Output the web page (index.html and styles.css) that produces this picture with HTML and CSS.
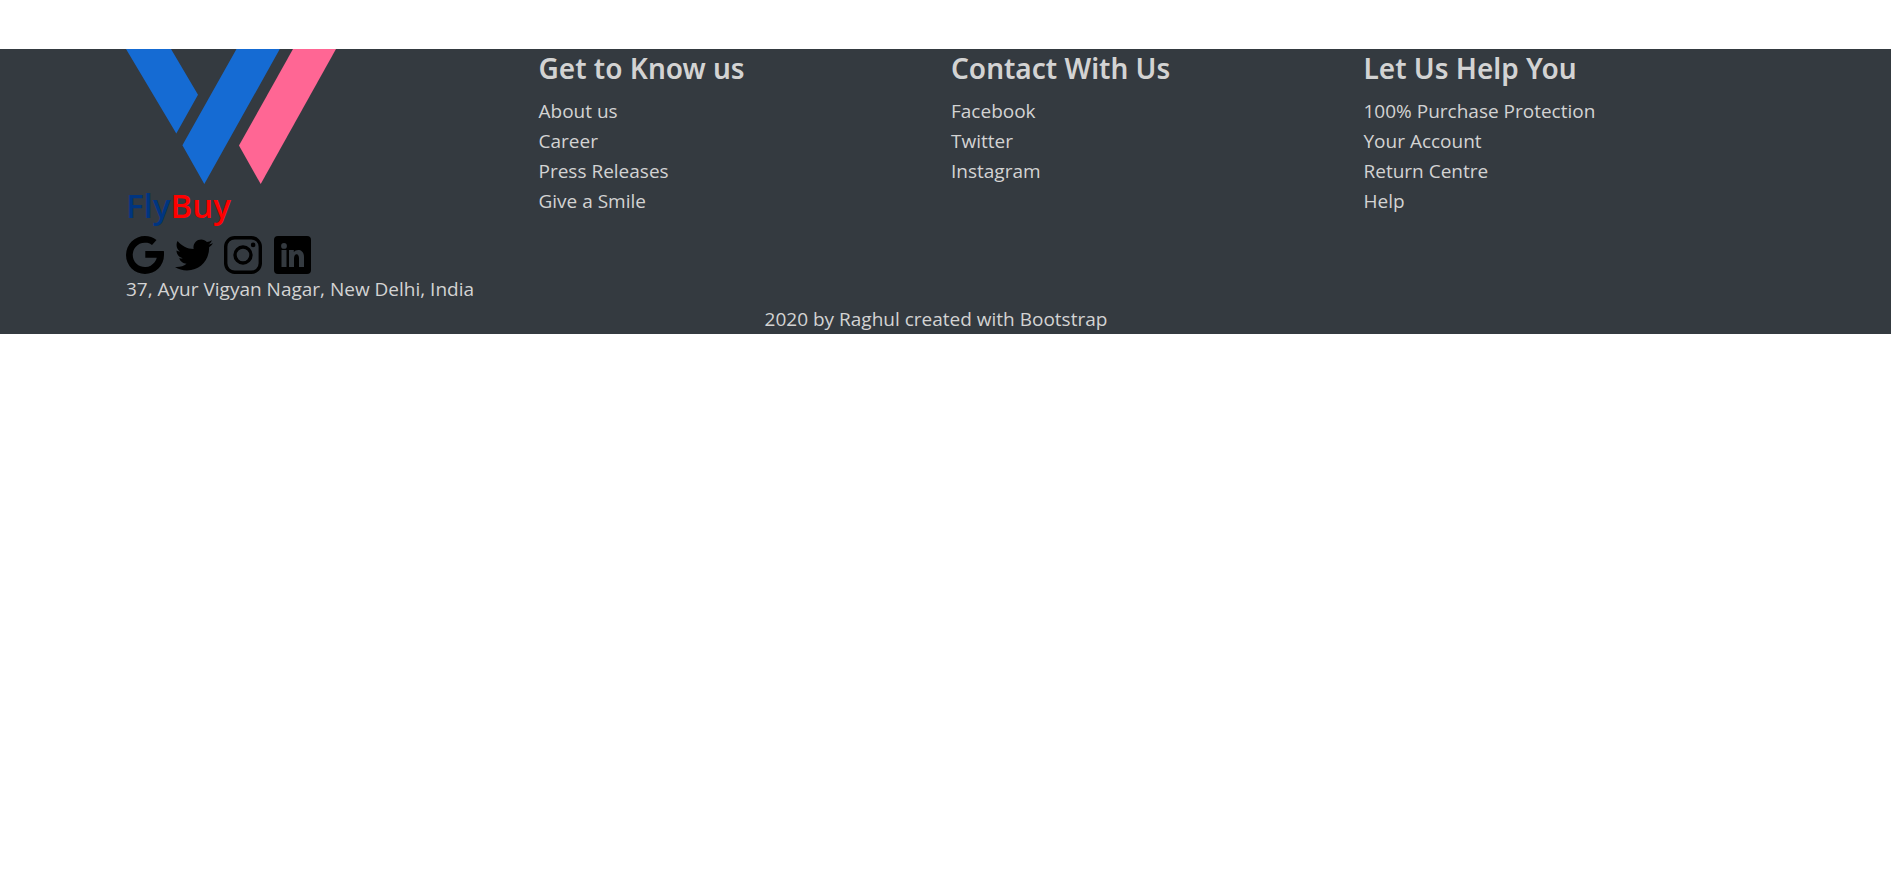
FILE: index.html
```html
<!DOCTYPE html>
<html lang="en">
<head>
<meta charset="utf-8">
<meta name="viewport" content="width=device-width, initial-scale=1">
<title>FlyBuy</title>
<link rel="stylesheet" href="styles.css">
</head>
<body>
<footer class="footer">
  <div class="container">
    <div class="columns">
      <section class="column">
        <svg class="logo" viewBox="0 0 210 135" role="img" aria-label="FlyBuy logo">
          <path fill="#156bd3" d="M0 0H45L72 45.7 50.3 84.5ZM110.5 0H153.8L78.3 135 56.4 96.3Z"/>
          <path fill="#ff6694" d="M167 0H210L134.7 135 113 96.6Z"/>
        </svg>
        <h1 class="brand"><span class="brand-fly">Fly</span><span class="brand-buy">Buy</span></h1>
        <div class="social">
          <a href="#" aria-label="Google"><svg viewBox="0 0 38 38"><path d="M19 0a19 19 0 1 0 19 19v-2.500q0-1-.2-1.500H19.300v6.700H30.800A12.200 12.200 0 1 1 26 8.900L30.500 3.900A19 19 0 0 0 19 0z"/></svg></a>
          <a href="#" aria-label="Twitter"><svg viewBox="0 0 24 24"><path d="M23.954 4.569c-.885.389-1.83.654-2.825.775 1.014-.611 1.794-1.574 2.163-2.723-.951.555-2.005.959-3.127 1.184-.896-.959-2.173-1.559-3.591-1.559-2.717 0-4.92 2.203-4.92 4.917 0 .39.045.765.127 1.124C7.691 8.094 4.066 6.13 1.64 3.161c-.427.722-.666 1.561-.666 2.475 0 1.71.87 3.213 2.188 4.096-.807-.026-1.566-.248-2.228-.616v.061c0 2.385 1.693 4.374 3.946 4.827-.413.111-.849.171-1.296.171-.314 0-.615-.03-.916-.086.631 1.953 2.445 3.377 4.604 3.417-1.68 1.319-3.809 2.105-6.102 2.105-.39 0-.779-.023-1.17-.067 2.189 1.394 4.768 2.209 7.557 2.209 9.054 0 13.999-7.496 13.999-13.986 0-.209 0-.42-.015-.63.961-.689 1.8-1.56 2.46-2.548l-.047-.02z"/></svg></a>
          <a href="#" aria-label="Instagram"><svg viewBox="0 0 38 38"><rect x="1.700" y="1.700" width="34.600" height="34.600" rx="9" fill="none" stroke="#000" stroke-width="3.400"/><circle cx="19" cy="19" r="8" fill="none" stroke="#000" stroke-width="3.400"/><circle cx="29.100" cy="8.900" r="2.300"/></svg></a>
          <a href="#" aria-label="LinkedIn"><svg viewBox="0 0 38 38"><path fill-rule="evenodd" d="M5 0H34Q38 0 38 4V34Q38 38 34 38H5Q1 38 1 34V4Q1 0 5 0ZM8.500 14V31H13.500V14ZM11 7A2.900 2.900 0 1 0 11 12.800 2.900 2.900 0 1 0 11 7ZM16 14V31H21V22.500C21 16.800 26 17 26 22V31H31V21C31 12.800 23.200 12.500 20.800 16.300V14Z"/></svg></a>
        </div>
        <p>37, Ayur Vigyan Nagar, New Delhi, India</p>
      </section>
      <section class="column">
        <h2 class="title">Get to Know us</h2>
        <ul class="links">
          <li><a href="#">About us</a></li>
          <li><a href="#">Career</a></li>
          <li><a href="#">Press Releases</a></li>
          <li><a href="#">Give a Smile</a></li>
        </ul>
      </section>
      <section class="column">
        <h2 class="title">Contact With Us</h2>
        <ul class="links">
          <li><a href="#">Facebook</a></li>
          <li><a href="#">Twitter</a></li>
          <li><a href="#">Instagram</a></li>
        </ul>
      </section>
      <section class="column">
        <h2 class="title">Let Us Help You</h2>
        <ul class="links">
          <li><a href="#">100% Purchase Protection</a></li>
          <li><a href="#">Your Account</a></li>
          <li><a href="#">Return Centre</a></li>
          <li><a href="#">Help</a></li>
        </ul>
      </section>
    </div>
    <p class="copyright">2020 by Raghul created with Bootstrap</p>
  </div>
</footer>
</body>
</html>
```
FILE: styles.css
```css
* {
  box-sizing: border-box;
  margin: 0;
  padding: 0;
}

body {
  padding-top: 49px;
  background: #fff;
  color: #d3d3d3;
  font-family: "Segoe UI", "Open Sans", "Noto Sans", sans-serif;
  font-size: 19px;
  line-height: 30px;
}

.footer {
  padding-right: 19px;
  background: #343a40;
}

.container {
  max-width: 1650px;
  margin: 0 auto;
}

.columns {
  display: grid;
  grid-template-columns: repeat(auto-fit, minmax(380px, 1fr));
}

.column {
  padding: 0 15px;
}

.logo {
  display: block;
  width: 210px;
}

.brand {
  margin-bottom: 8px;
  font-size: 33px;
  font-weight: 600;
  line-height: 44px;
}

.brand-fly {
  color: #003580;
}

.brand-buy {
  color: #f00;
}

.social {
  display: flex;
  gap: 11px;
}

.social svg {
  display: block;
  width: 38px;
  height: 38px;
}

.title {
  margin-bottom: 9px;
  font-family: "Segoe UI", "Noto Sans", "Open Sans", sans-serif;
  font-size: 28px;
  font-weight: 600;
  line-height: 38px;
}

.links {
  list-style: none;
}

.links a {
  color: inherit;
  text-decoration: none;
}

.copyright {
  text-align: center;
}
```
